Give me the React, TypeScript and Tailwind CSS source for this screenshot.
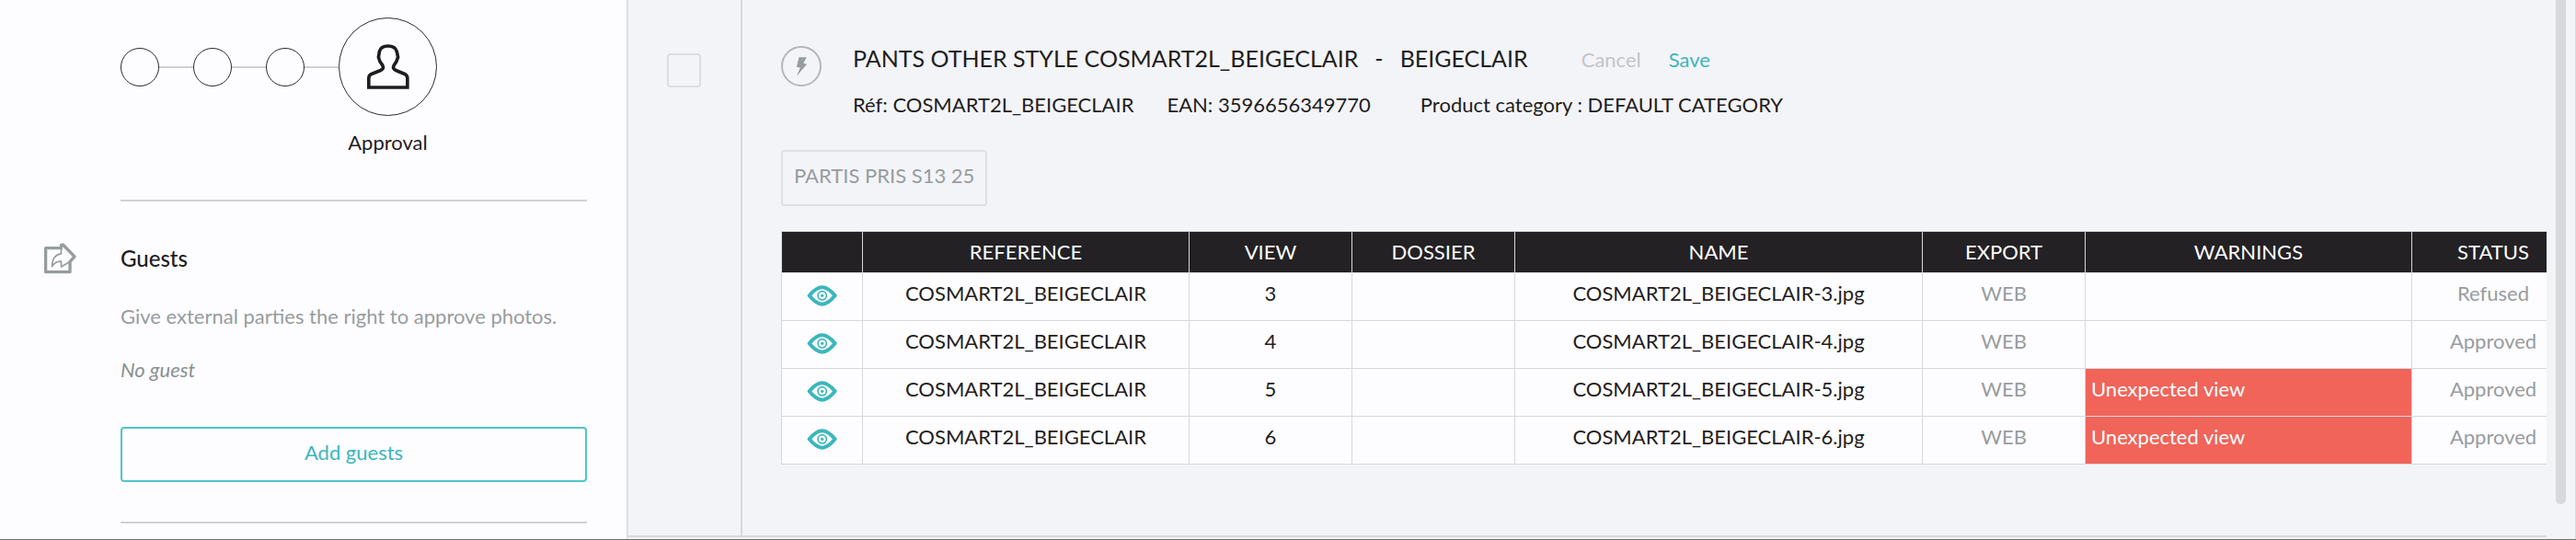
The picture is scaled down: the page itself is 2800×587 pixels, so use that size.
import type React from "react";
import { useState } from "react";

interface ViewRow {
  reference: string;
  view: number;
  dossier: string;
  name: string;
  exportType: string;
  warning?: string;
  status: string;
}

const ROWS: ViewRow[] = [
  { reference: "COSMART2L_BEIGECLAIR", view: 3, dossier: "", name: "COSMART2L_BEIGECLAIR-3.jpg", exportType: "WEB", status: "Refused" },
  { reference: "COSMART2L_BEIGECLAIR", view: 4, dossier: "", name: "COSMART2L_BEIGECLAIR-4.jpg", exportType: "WEB", status: "Approved" },
  { reference: "COSMART2L_BEIGECLAIR", view: 5, dossier: "", name: "COSMART2L_BEIGECLAIR-5.jpg", exportType: "WEB", warning: "Unexpected view", status: "Approved" },
  { reference: "COSMART2L_BEIGECLAIR", view: 6, dossier: "", name: "COSMART2L_BEIGECLAIR-6.jpg", exportType: "WEB", warning: "Unexpected view", status: "Approved" },
];

const COLUMNS = [
  { label: "", width: "w-[88px]" },
  { label: "REFERENCE", width: "w-[355px]" },
  { label: "VIEW", width: "w-[177px]" },
  { label: "DOSSIER", width: "w-[177px]" },
  { label: "NAME", width: "w-[443px]" },
  { label: "EXPORT", width: "w-[177px]" },
  { label: "WARNINGS", width: "w-[355px]" },
  { label: "STATUS", width: "w-[177px]" },
];

const PersonIcon = () => (
  <svg viewBox="146 144 138 148" className="w-[46px] h-[49px]" fill="none" stroke="#1d1d1f" strokeWidth="11" aria-hidden="true">
    <path d="M151 286V256Q151 246 160 242L188 231Q203 225 196 213Q186 202 183 187L186 168Q191 150 214 150Q238 150 243 168L247 187Q243 202 234 213Q227 225 242 231L269 242Q278 247 278 256V286Z" />
  </svg>
);

const ShareIcon = () => (
  <svg viewBox="54 43 106 101" className="w-[35px] h-[34px]" fill="none" stroke="#979d9f" strokeLinejoin="round" aria-hidden="true">
    <path strokeWidth="10" d="M59 59H110V50L116 48L154 87L139 104V138H59Z" />
    <path strokeWidth="5" d="M110 60V78Q80 82 80 120Q90 102 110 103V121L139 104" />
  </svg>
);

const BoltIcon = () => (
  <svg viewBox="74 68 38 63" className="w-[13px] h-[21px]" fill="#979c9f" aria-hidden="true">
    <path d="M84 69H109L98 88L110 91L76 130L88 103L76 100Z" />
  </svg>
);

const EyeIcon = () => (
  <svg viewBox="110 26 99 69" className="w-[33px] h-[23px]" fill="none" stroke="#3cb6bd" strokeLinejoin="round" aria-hidden="true">
    <path strokeWidth="12" d="M118 60Q141 33 160 33Q179 33 202 60Q179 88 160 88Q141 88 118 60Z" />
    <circle cx="160" cy="60" r="14" strokeWidth="5" />
    <circle cx="160" cy="60" r="5" fill="#3cb6bd" stroke="none" />
  </svg>
);

const Step = () => (
  <>
    <span className="w-[42px] h-[42px] rounded-full border border-[#2c2c2e]" />
    <span className="w-[37px] h-0.5 bg-[#cfcfd2]" />
  </>
);

const Sidebar: React.FC = () => (
  <aside className="w-[683px] shrink-0 border-r-2 border-[#dfe0e2] bg-[#fdfcfe] pl-[131px] pr-[43px] pt-[19px] pb-[17px]">
    {/* Workflow steps */}
    <div className="flex items-center">
      <Step />
      <Step />
      <Step />
      <div className="flex w-[107px] h-[107px] items-center justify-center rounded-full border border-[#2c2c2e]">
        <PersonIcon />
      </div>
    </div>
    <div className="mt-[14px] ml-[237px] w-[107px] text-center">Approval</div>

    {/* Guests */}
    <section className="mt-[47px] border-y-2 border-[#d2d2d5] pt-[45px] pb-[43px]">
      <div className="flex items-center -ml-[83px] gap-12">
        <ShareIcon />
        <h2 className="text-2xl leading-[30px] font-medium">Guests</h2>
      </div>
      <p className="mt-[31px] text-[#979c9e]">Give external parties the right to approve photos.</p>
      <p className="mt-7 italic text-[#8a9092]">No guest</p>
      <button
        type="button"
        className="mt-[47px] h-[60px] w-full rounded border-2 border-[#4fc4cb] pb-1 text-[#3cb6bd]"
      >
        Add guests
      </button>
    </section>
  </aside>
);

const ViewsTable: React.FC = () => (
  <div className="mt-[27px] overflow-hidden">
    <table className="w-full min-w-[1949px] table-fixed border-collapse bg-[#fdfcfe] text-center">
      <thead className="bg-[#232124] text-white">
        <tr className="h-[45px]">
          {COLUMNS.map((column) => (
            <th key={column.label} className={`${column.width} border border-[#d8d8db] font-normal`}>
              {column.label}
            </th>
          ))}
        </tr>
      </thead>
      <tbody>
        {ROWS.map((row) => (
          <tr key={row.view} className="h-[52px] *:border *:border-[#d8d8db] *:pb-2">
            <td>
              <button type="button" aria-label={`Show view ${row.view}`} className="block mx-auto mt-1.5">
                <EyeIcon />
              </button>
            </td>
            <td>{row.reference}</td>
            <td>{row.view}</td>
            <td>{row.dossier}</td>
            <td>{row.name}</td>
            <td className="text-[#979c9e]">{row.exportType}</td>
            <td className={row.warning ? "bg-[#f06459] pl-1.5 text-left text-white" : ""}>{row.warning}</td>
            <td className="text-[#979c9e]">{row.status}</td>
          </tr>
        ))}
      </tbody>
    </table>
  </div>
);

const App: React.FC = () => {
  const [selected, setSelected] = useState(false);

  return (
    <div className="flex border-b border-[#6f6f72] bg-[#f3f4f8] font-['Lato',sans-serif] text-[22px] leading-[30px] text-[#1f1e20]">
      <Sidebar />

      <main className="flex min-w-0 flex-1 border-r border-[#d8d9dc]">
        <article className="mb-0.5 flex min-w-0 flex-1 border-b-2 border-[#d8d9dc]">
          <div className="w-[124px] shrink-0 border-r-2 border-[#d8d9dc] pt-[58px] pl-[42px]">
            <input
              type="checkbox"
              aria-label="Select product"
              checked={selected}
              onChange={(e) => setSelected(e.target.checked)}
              className="block w-[37px] h-[37px] appearance-none rounded border-2 border-[#dcdddf] checked:bg-[#3cb6bd]"
            />
          </div>

          <div className="min-w-0 flex-1 pt-[50px] pl-[42px]">
            <header className="flex gap-[34px]">
              <span className="flex w-11 h-11 shrink-0 items-center justify-center rounded-full border-2 border-[#b4b6b9]">
                <BoltIcon />
              </span>
              <div>
                <div className="flex items-baseline leading-[26px]">
                  <h1 className="flex gap-[18px] text-[25px] leading-[26px]">
                    <span>PANTS OTHER STYLE COSMART2L_BEIGECLAIR</span>
                    <span>-</span>
                    <span>BEIGECLAIR</span>
                  </h1>
                  <button type="button" className="ml-[58px] text-[#c3c5c8]">Cancel</button>
                  <button type="button" className="ml-[30px] text-[#3cb6bd]">Save</button>
                </div>
                <div className="mt-[21px] flex">
                  <span>Réf: COSMART2L_BEIGECLAIR</span>
                  <span className="ml-9">EAN: 3596656349770</span>
                  <span className="ml-[54px]">Product category : DEFAULT CATEGORY</span>
                </div>
              </div>
            </header>

            <div className="mt-[34px] flex h-[61px] w-fit items-center rounded border-2 border-[#dfe0e3] px-3 pb-1.5 text-[#979c9e]">
              PARTIS PRIS S13 25
            </div>

            <ViewsTable />
          </div>
        </article>

        {/* Scroll thumb */}
        <div className="w-[31px] shrink-0 px-2.5 pb-[38px]">
          <div className="h-full w-[11px] rounded-b-full bg-[#d8d9da]" />
        </div>
      </main>
    </div>
  );
};

export default App;
